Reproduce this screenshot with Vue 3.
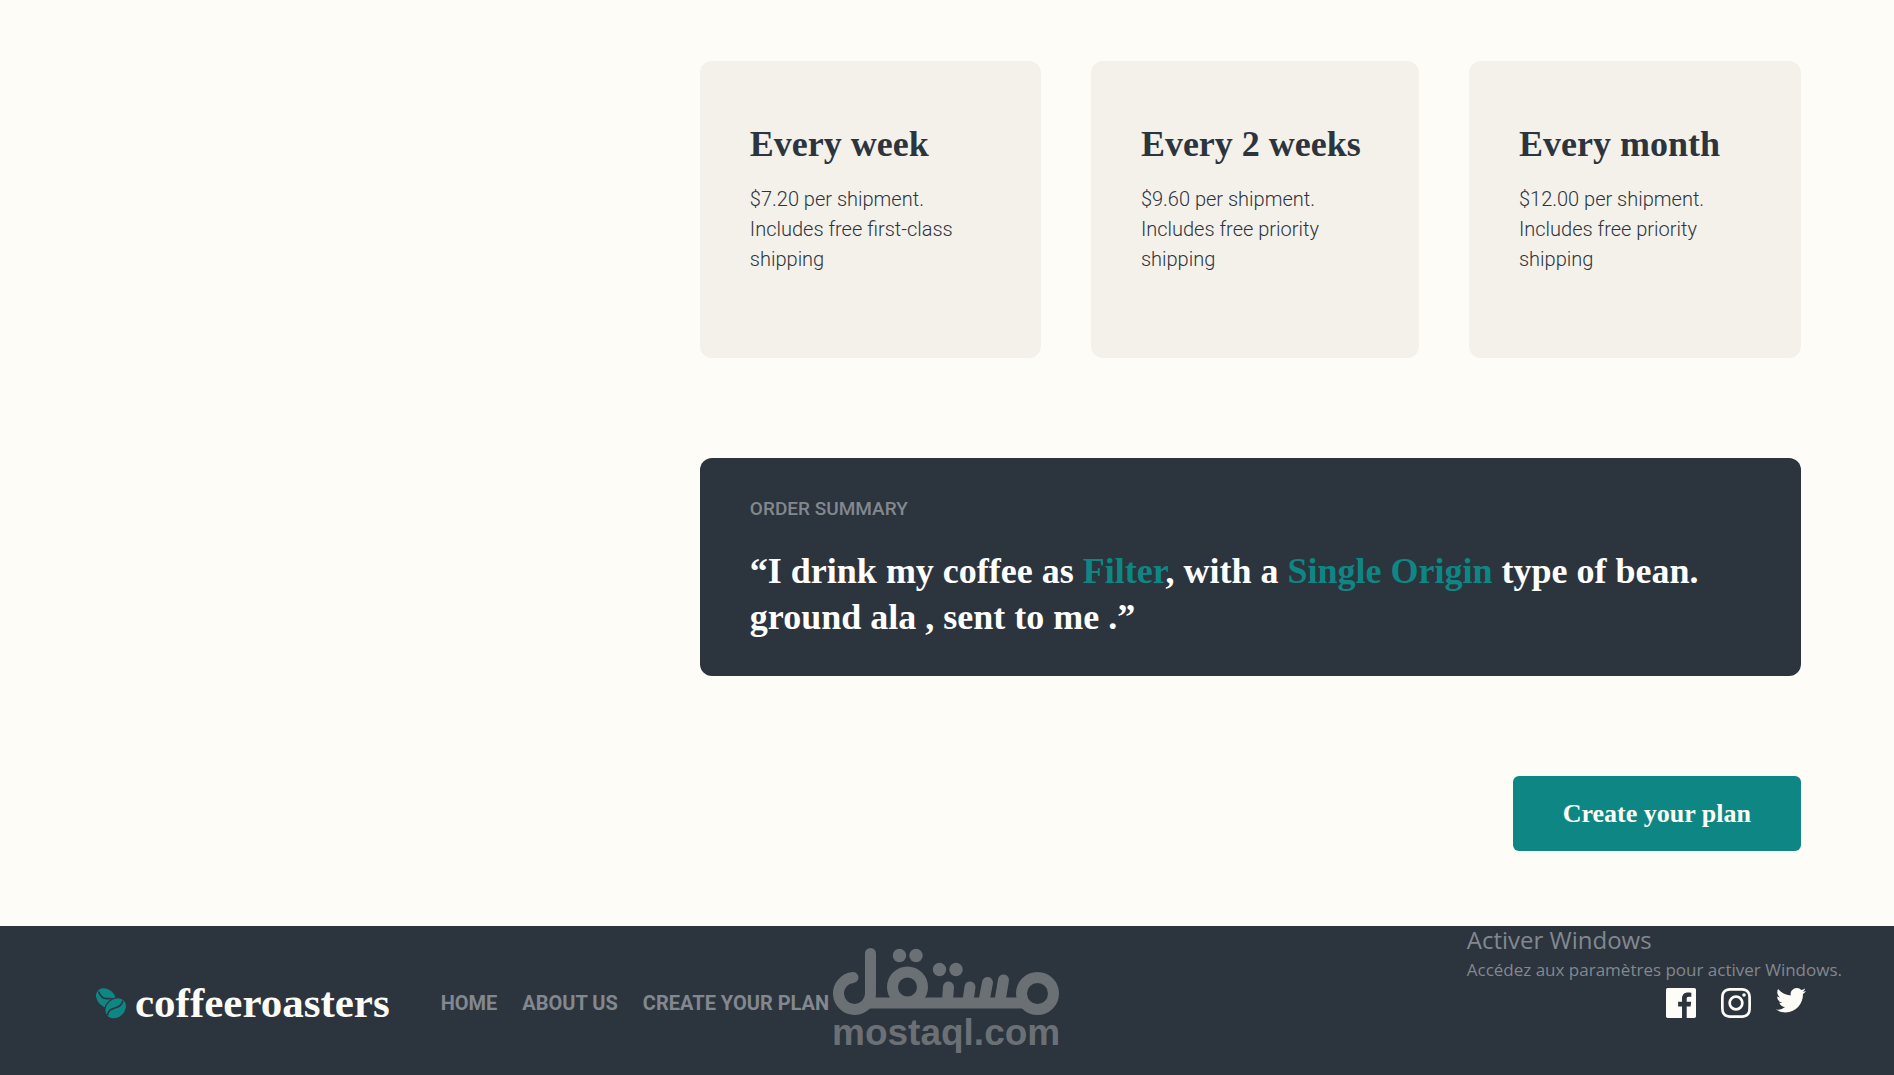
<script setup>
const plans = [
  { title: 'Every week', price: '$7.20 per shipment.', shipping: 'Includes free first-class shipping' },
  { title: 'Every 2 weeks', price: '$9.60 per shipment.', shipping: 'Includes free priority shipping' },
  { title: 'Every month', price: '$12.00 per shipment.', shipping: 'Includes free priority shipping' },
]

const links = ['HOME', 'ABOUT US', 'CREATE YOUR PLAN']

const socials = [
  {
    name: 'Facebook',
    box: '0 0 24 24',
    path: 'M22.675 0H1.325C.593 0 0 .593 0 1.325v21.351C0 23.407.593 24 1.325 24H12.82v-9.294H9.692v-3.622h3.128V8.413c0-3.1 1.893-4.788 4.659-4.788 1.325 0 2.463.099 2.795.143v3.24l-1.918.001c-1.504 0-1.795.715-1.795 1.763v2.313h3.587l-.467 3.622h-3.12V24h6.116c.73 0 1.323-.593 1.323-1.325V1.325C24 .593 23.407 0 22.675 0z',
  },
  {
    name: 'Instagram',
    box: '0 0 24 24',
    path: 'M12 2.163c3.204 0 3.584.012 4.85.07 3.252.148 4.771 1.691 4.919 4.919.058 1.265.069 1.645.069 4.849 0 3.205-.012 3.584-.069 4.849-.149 3.225-1.664 4.771-4.919 4.919-1.266.058-1.644.07-4.85.07-3.204 0-3.584-.012-4.849-.07-3.26-.149-4.771-1.699-4.919-4.92-.058-1.265-.07-1.644-.07-4.849 0-3.204.013-3.583.07-4.849.149-3.227 1.664-4.771 4.919-4.919 1.266-.057 1.645-.069 4.849-.069zM12 0C8.741 0 8.333.014 7.053.072 2.695.272.273 2.69.073 7.052.014 8.333 0 8.741 0 12c0 3.259.014 3.668.072 4.948.2 4.358 2.618 6.78 6.98 6.98C8.333 23.986 8.741 24 12 24c3.259 0 3.668-.014 4.948-.072 4.354-.2 6.782-2.618 6.979-6.98.059-1.28.073-1.689.073-4.948 0-3.259-.014-3.667-.072-4.947-.196-4.354-2.617-6.78-6.979-6.98C15.668.014 15.259 0 12 0zm0 5.838a6.162 6.162 0 100 12.324 6.162 6.162 0 000-12.324zM12 16a4 4 0 110-8 4 4 0 010 8zm6.406-11.845a1.44 1.44 0 100 2.881 1.44 1.44 0 000-2.881z',
  },
  {
    name: 'Twitter',
    box: '0 2.25 24 24',
    path: 'M24 4.557c-.883.392-1.832.656-2.828.775 1.017-.609 1.798-1.574 2.165-2.724-.951.564-2.005.974-3.127 1.195-.897-.957-2.178-1.555-3.594-1.555-3.179 0-5.515 2.966-4.797 6.045-4.091-.205-7.719-2.165-10.148-5.144-1.29 2.213-.669 5.108 1.523 6.574-.806-.026-1.566-.247-2.229-.616-.054 2.281 1.581 4.415 3.949 4.89-.693.188-1.452.232-2.224.084.626 1.956 2.444 3.379 4.6 3.419-2.07 1.623-4.678 2.348-7.29 2.04 2.179 1.397 4.768 2.212 7.548 2.212 9.142 0 14.307-7.721 13.995-14.646.962-.695 1.797-1.562 2.457-2.549z',
  },
]
</script>

<template>
  <div class="page">
    <main class="content">
      <div class="plans">
        <button v-for="plan in plans" :key="plan.title" type="button" class="plan">
          <span class="plan-title">{{ plan.title }}</span>
          <span class="plan-text">{{ plan.price }}<br />{{ plan.shipping }}</span>
        </button>
      </div>

      <section class="summary">
        <h2 class="summary-label">ORDER SUMMARY</h2>
        <p class="summary-text">
          “I drink my coffee as <span class="choice">Filter</span>, with a
          <span class="choice">Single Origin</span> type of bean.<br />ground ala , sent to me .”
        </p>
      </section>

      <button type="button" class="submit">Create your plan</button>
    </main>

    <footer class="footer">
      <a href="#" class="brand">
        <svg class="beans" viewBox="0 0 30 31" aria-hidden="true">
          <ellipse cx="10" cy="10" rx="11" ry="8.6" transform="rotate(42 10 10)" fill="#0e8784" />
          <path d="M2.5 3.5C4.5 9 8.5 11 12 10.6S17 10.500 19 13" fill="none" stroke="#2c343e" stroke-width="1.6" />
          <ellipse cx="19.700" cy="20.300" rx="12.700" ry="10.200" transform="rotate(-42 19.700 20.300)" fill="#2c343e" />
          <ellipse cx="19.700" cy="20.300" rx="11.200" ry="9" transform="rotate(-42 19.700 20.300)" fill="#0e8784" />
          <path d="M11.500 27.500C12.500 21.500 16 20.800 19.500 19.800S26 17 27 12.500" fill="none" stroke="#2c343e" stroke-width="1.6" />
        </svg>
        <span class="brand-name">coffeeroasters</span>
      </a>
      <nav class="nav">
        <a v-for="link in links" :key="link" href="#" class="nav-link">{{ link }}</a>
      </nav>
      <div class="socials">
        <a v-for="item in socials" :key="item.name" href="#" class="social" :aria-label="item.name">
          <svg :viewBox="item.box" aria-hidden="true"><path :d="item.path" fill="#fefcf7" /></svg>
        </a>
      </div>

      <div class="stamp">
        <svg class="stamp-mark" viewBox="0 0 228 68" aria-hidden="true">
          <g fill="none" stroke="#6b7075" stroke-width="11" stroke-linecap="round">
            <path d="M21 30.500A16 16 0 1 0 38.500 46.500V6.500" />
            <path d="M36 56H192" />
            <circle cx="75.500" cy="40" r="15" />
            <circle cx="205.500" cy="46.500" r="16" />
            <path d="M115.500 54L116.500 40M136 54L138 40M152 54L155.500 35.500M168 54L171.500 33" />
          </g>
          <g fill="#6b7075">
            <circle cx="67.500" cy="8.500" r="6.700" />
            <circle cx="84" cy="8.500" r="6.700" />
            <circle cx="107.500" cy="22.500" r="6.700" />
            <circle cx="124" cy="22.500" r="6.700" />
          </g>
        </svg>
        <span class="stamp-text">mostaql.com</span>
      </div>

      <div class="notice">
        <p class="notice-title">Activer Windows</p>
        <p class="notice-text">Accédez aux paramètres pour activer Windows.</p>
      </div>
    </footer>
  </div>
</template>

<style>
body {
  margin: 0;
  background: #fefcf7;
}
</style>

<style scoped>
.page {
  color: #2c343e;
  font-family: Roboto, "Liberation Sans", sans-serif;
}
.content {
  display: flex;
  flex-direction: column;
  gap: 100px;
  margin-left: 36.95%;
  padding: 61px 93px 75px 0;
}
.plans {
  display: grid;
  grid-template-columns: 341fr 328fr 332fr;
  gap: 50px;
}
.plan {
  display: flex;
  flex-direction: column;
  gap: 18px;
  padding: 61px 50px 84px;
  border: 0;
  border-radius: 12px;
  background: #f4f1eb;
  color: inherit;
  font-family: inherit;
  text-align: left;
}
.plan-title {
  font: bold 36px/44px "Liberation Serif", serif;
  white-space: nowrap;
}
.plan-text {
  font-size: 20px;
  font-weight: 300;
  line-height: 30px;
}
.summary {
  padding: 36px 50px;
  border-radius: 12px;
  background: #2c343e;
}
.summary-label {
  margin: 0 0 24px;
  color: #83888f;
  font-size: 19px;
  font-weight: 500;
  line-height: 30px;
}
.summary-text {
  margin: 0;
  color: #fff;
  font: bold 36px/46px "Liberation Serif", serif;
}
.choice {
  color: #0e8784;
}
.submit {
  align-self: flex-end;
  padding: 0 50px;
  border: 0;
  border-radius: 6px;
  background: #0e8784;
  color: #fefcf7;
  font: bold 26px/75px "Liberation Serif", serif;
}
.footer {
  position: relative;
  display: flex;
  align-items: center;
  padding: 52px 88px 47px 96px;
  background: #2c343e;
}
.brand {
  display: flex;
  align-items: center;
  gap: 9px;
  margin-right: 51px;
  color: #fefcf7;
  text-decoration: none;
}
.beans {
  width: 30px;
  height: 31px;
}
.brand-name {
  font: bold 43px/50px "Liberation Serif", serif;
}
.nav {
  display: flex;
  gap: 25px;
}
.nav-link {
  color: #83888f;
  font-size: 20px;
  font-weight: 700;
  line-height: 30px;
  text-decoration: none;
}
.socials {
  display: flex;
  gap: 25px;
  margin-left: auto;
}
.social,
.social svg {
  display: block;
  width: 30px;
  height: 30px;
}
.stamp {
  position: absolute;
  top: 21px;
  left: 50%;
  width: 228px;
  margin-left: -115px;
  color: #6b7075;
}
.stamp-mark {
  display: block;
  width: 228px;
  height: 68px;
}
.stamp-text {
  display: block;
  font: bold 37px/36px "Liberation Sans", sans-serif;
}
.notice {
  position: absolute;
  top: 0;
  right: 52px;
  color: #83888f;
  font-family: "Open Sans", "Noto Sans", sans-serif;
}
.notice p {
  margin: 0;
}
.notice-title {
  font-size: 24px;
  line-height: 28px;
}
.notice-text {
  font-size: 17px;
  line-height: 32px;
}
</style>
